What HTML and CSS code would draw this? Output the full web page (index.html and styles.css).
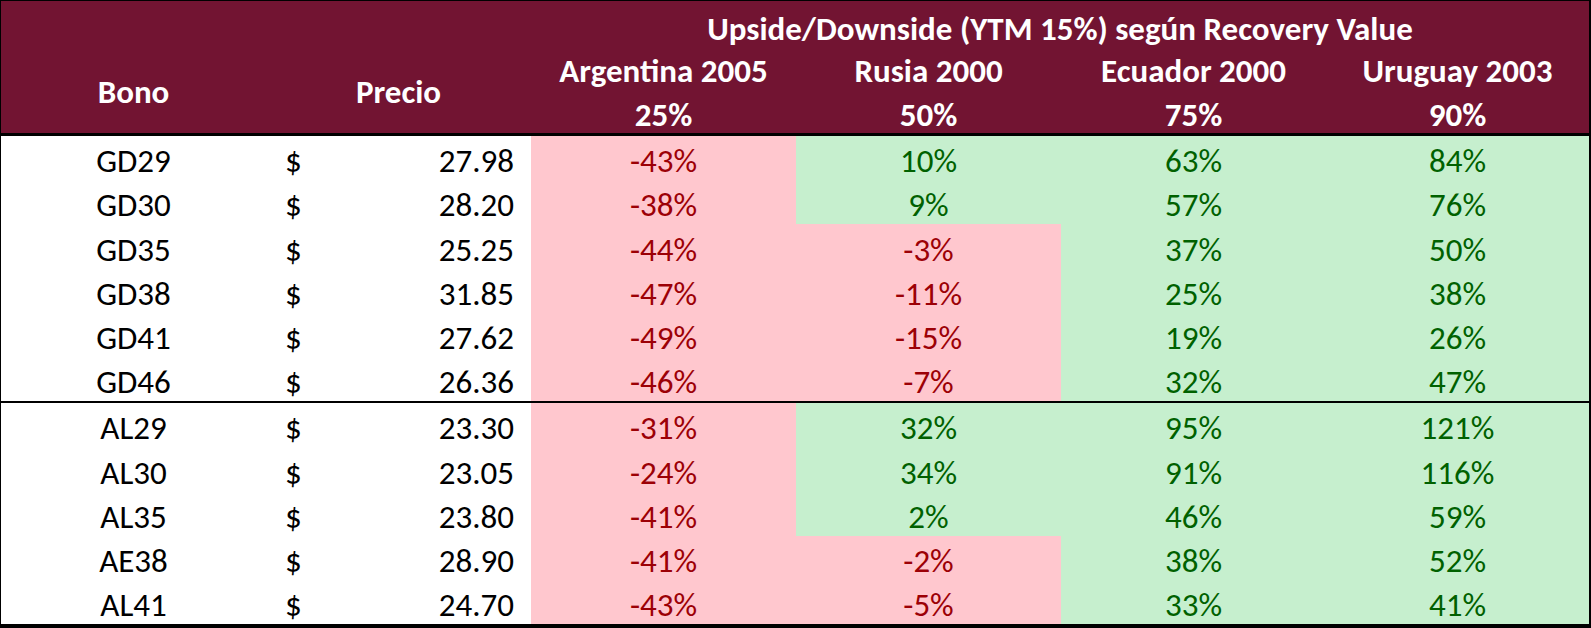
FILE: index.html
```html
<!DOCTYPE html>
<html lang="es">
<head>
<meta charset="utf-8">
<title>Upside/Downside</title>
<link rel="stylesheet" href="styles.css">
</head>
<body>
<div class="sheet">
  <div class="head">
    <div class="hc bono">Bono</div>
    <div class="hc precio">Precio</div>
    <div class="hc title">Upside/Downside (YTM 15%) según Recovery Value</div>
    <div class="hc c3 r2">Argentina 2005</div>
    <div class="hc c4 r2">Rusia 2000</div>
    <div class="hc c5 r2">Ecuador 2000</div>
    <div class="hc c6 r2">Uruguay 2003</div>
    <div class="hc c3 r3">25%</div>
    <div class="hc c4 r3">50%</div>
    <div class="hc c5 r3">75%</div>
    <div class="hc c6 r3">90%</div>
  </div>
  <div class="group">
    <div class="row"><div class="cell">GD29</div><div class="cell price"><span>$</span><span>27.98</span></div><div class="cell neg">-43%</div><div class="cell pos">10%</div><div class="cell pos">63%</div><div class="cell pos">84%</div></div>
    <div class="row"><div class="cell">GD30</div><div class="cell price"><span>$</span><span>28.20</span></div><div class="cell neg">-38%</div><div class="cell pos">9%</div><div class="cell pos">57%</div><div class="cell pos">76%</div></div>
    <div class="row"><div class="cell">GD35</div><div class="cell price"><span>$</span><span>25.25</span></div><div class="cell neg">-44%</div><div class="cell neg">-3%</div><div class="cell pos">37%</div><div class="cell pos">50%</div></div>
    <div class="row"><div class="cell">GD38</div><div class="cell price"><span>$</span><span>31.85</span></div><div class="cell neg">-47%</div><div class="cell neg">-11%</div><div class="cell pos">25%</div><div class="cell pos">38%</div></div>
    <div class="row"><div class="cell">GD41</div><div class="cell price"><span>$</span><span>27.62</span></div><div class="cell neg">-49%</div><div class="cell neg">-15%</div><div class="cell pos">19%</div><div class="cell pos">26%</div></div>
    <div class="row"><div class="cell">GD46</div><div class="cell price"><span>$</span><span>26.36</span></div><div class="cell neg">-46%</div><div class="cell neg">-7%</div><div class="cell pos">32%</div><div class="cell pos">47%</div></div>
  </div>
  <div class="group sep">
    <div class="row"><div class="cell">AL29</div><div class="cell price"><span>$</span><span>23.30</span></div><div class="cell neg">-31%</div><div class="cell pos">32%</div><div class="cell pos">95%</div><div class="cell pos">121%</div></div>
    <div class="row"><div class="cell">AL30</div><div class="cell price"><span>$</span><span>23.05</span></div><div class="cell neg">-24%</div><div class="cell pos">34%</div><div class="cell pos">91%</div><div class="cell pos">116%</div></div>
    <div class="row"><div class="cell">AL35</div><div class="cell price"><span>$</span><span>23.80</span></div><div class="cell neg">-41%</div><div class="cell pos">2%</div><div class="cell pos">46%</div><div class="cell pos">59%</div></div>
    <div class="row"><div class="cell">AE38</div><div class="cell price"><span>$</span><span>28.90</span></div><div class="cell neg">-41%</div><div class="cell neg">-2%</div><div class="cell pos">38%</div><div class="cell pos">52%</div></div>
    <div class="row"><div class="cell">AL41</div><div class="cell price"><span>$</span><span>24.70</span></div><div class="cell neg">-43%</div><div class="cell neg">-5%</div><div class="cell pos">33%</div><div class="cell pos">41%</div></div>
  </div>
</div>
</body>
</html>
```
FILE: styles.css
```css
* { box-sizing: border-box; }
html, body { margin: 0; padding: 0; background: #ffffff; }
body {
  font-family: Carlito, Calibri, Lato, sans-serif;
  font-size: 33px;
}
.sheet {
  width: 1591px;
  height: 628px;
  border-top: 1px solid #000;
  border-left: 1px solid #000;
  border-right: 2px solid #000;
  border-bottom: 4px solid #000;
  display: flex;
  flex-direction: column;
}
.head {
  display: grid;
  grid-template-columns: 265px 265px 265px 265px 265px 263px;
  grid-template-rows: 44px 44px 44px;
  background: #721432;
  color: #ffffff;
  font-weight: bold;
  border-bottom: 3px solid #000;
  height: 135px;
  flex: none;
}
.hc {
  display: flex;
  align-items: flex-end;
  justify-content: center;
  line-height: 36px;
  white-space: nowrap;
}
.bono { grid-column: 1; grid-row: 2 / 4; align-items: center; padding-top: 6px; line-height: 40px; }
.precio { grid-column: 2; grid-row: 2 / 4; align-items: center; padding-top: 6px; line-height: 40px; }
.title { grid-column: 3 / 7; grid-row: 1; line-height: 32px; }
.c3 { grid-column: 3; }
.c4 { grid-column: 4; }
.c5 { grid-column: 5; }
.c6 { grid-column: 6; }
.r2 { grid-row: 2; }
.r3 { grid-row: 3; }
.group { display: flex; flex-direction: column; flex: none; }
.sep { border-top: 2px solid #000; }
.row {
  display: grid;
  grid-template-columns: 265px 265px 265px 265px 265px 263px;
  height: 44.2px;
  flex: none;
}
.cell {
  display: flex;
  align-items: flex-end;
  justify-content: center;
  line-height: 38px;
  color: #000;
  white-space: nowrap;
}
.price {
  justify-content: space-between;
  padding: 0 17px 0 19px;
}
.neg { background: #ffc7ce; color: #9c0006; }
.pos { background: #c6efce; color: #006100; }
```
